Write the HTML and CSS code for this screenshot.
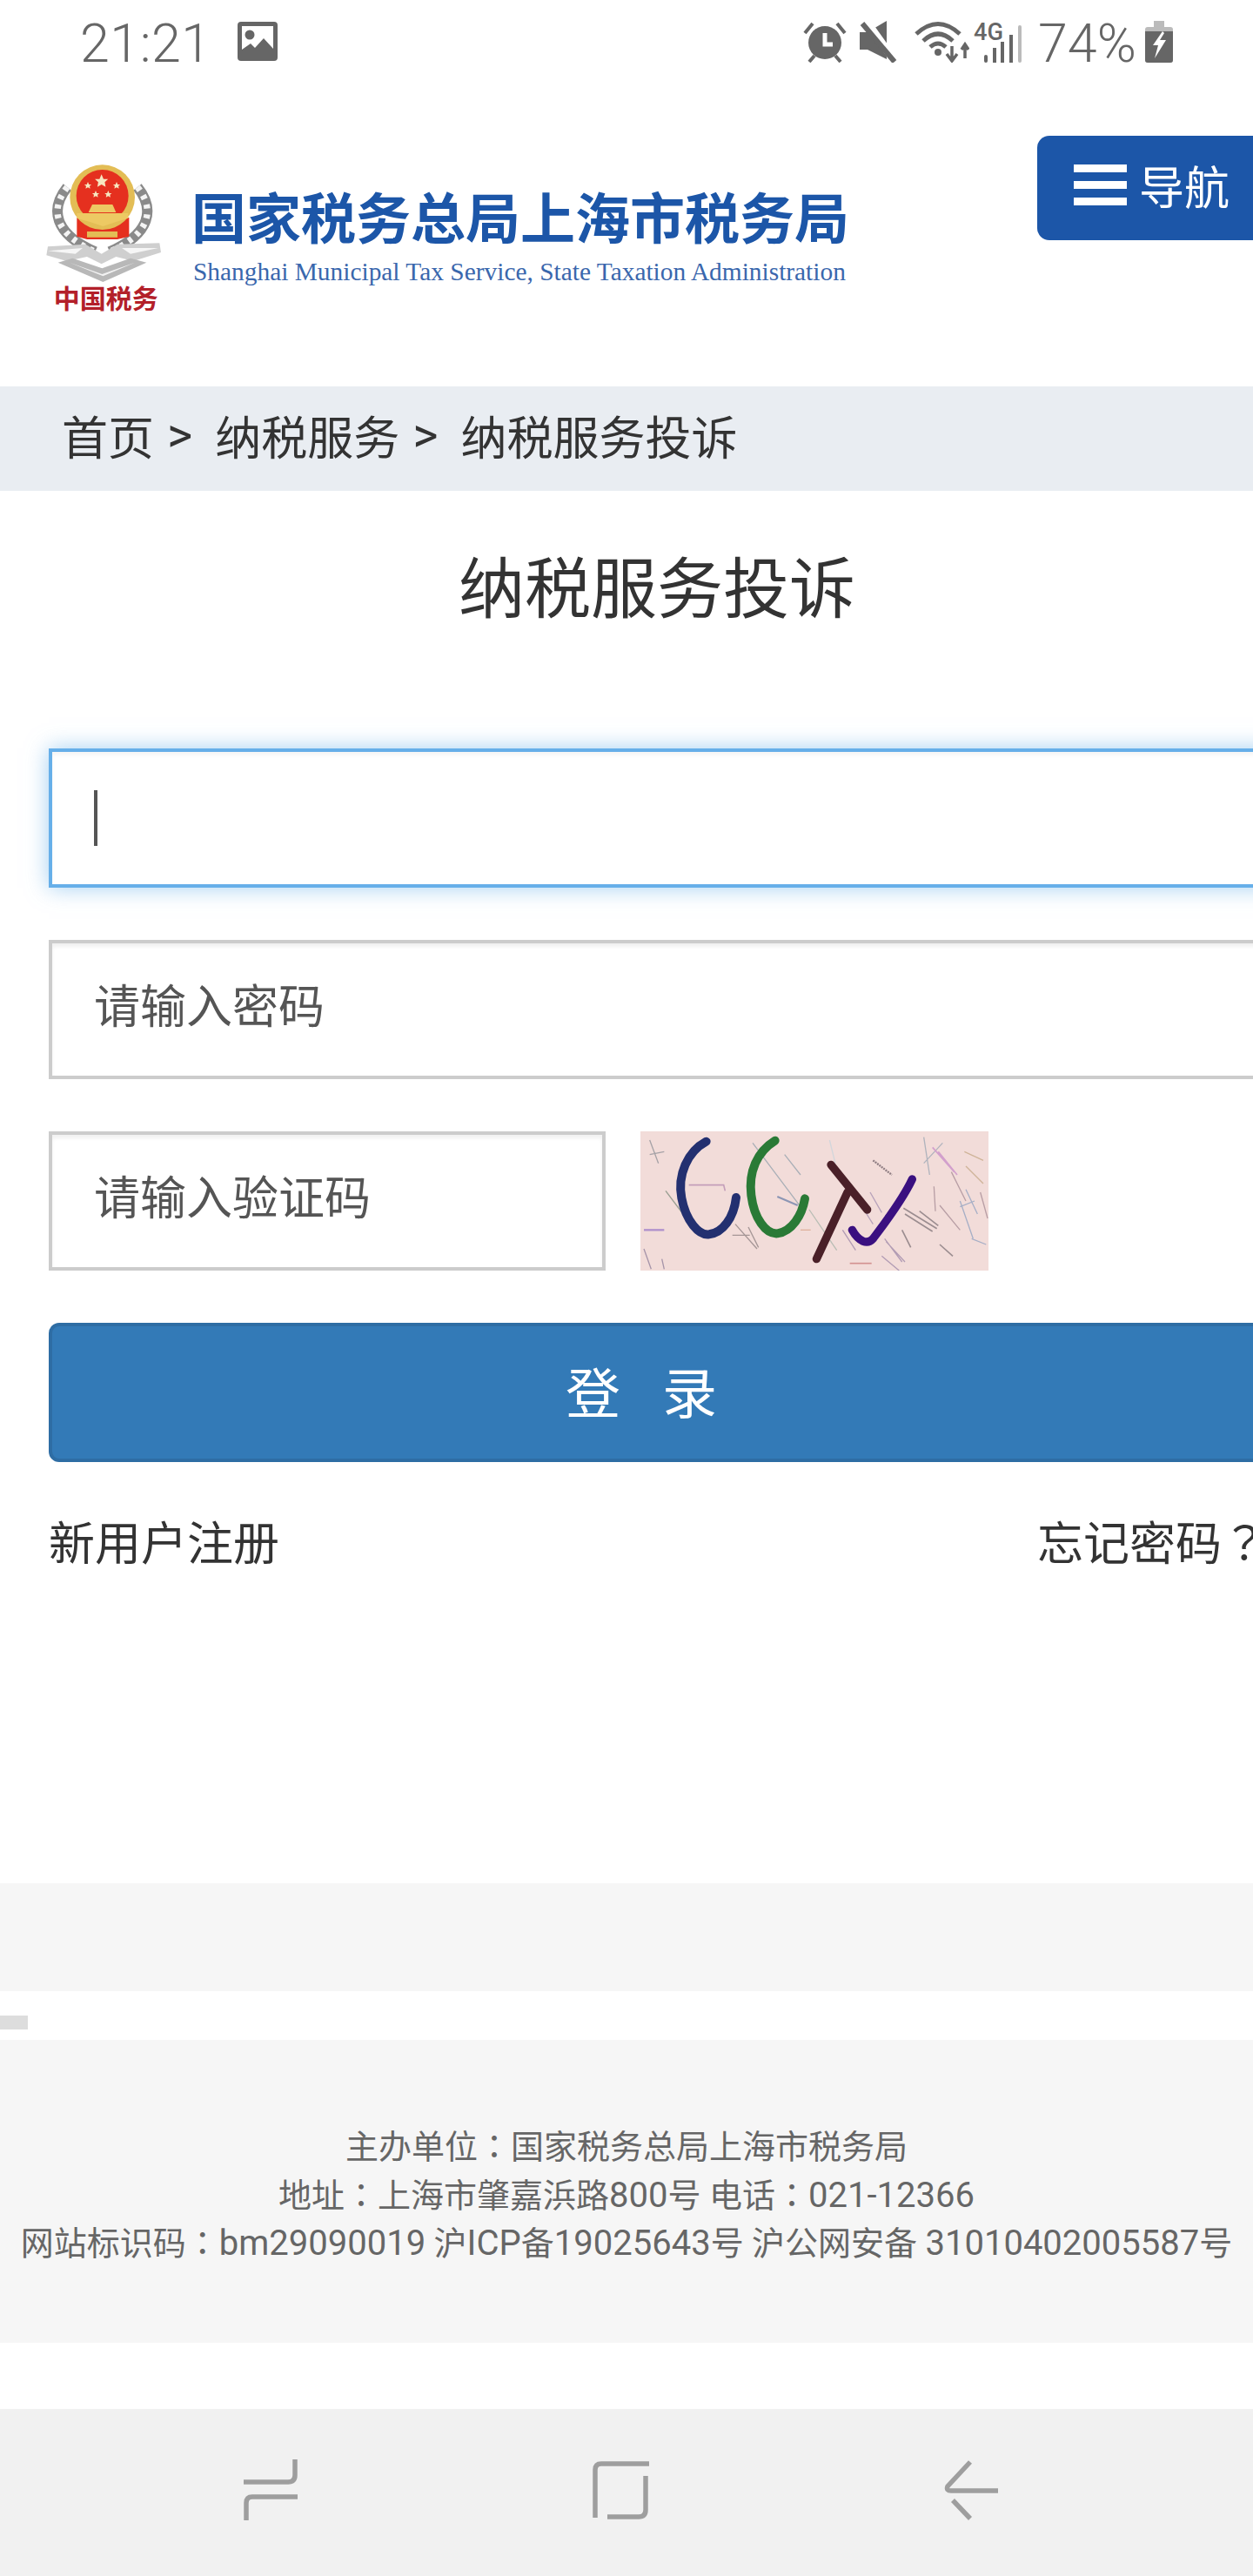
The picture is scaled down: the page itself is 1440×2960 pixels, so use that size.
FILE: index.html
```html
<!DOCTYPE html>
<html lang="zh-CN">
  <head>
    <meta charset="UTF-8" />
    <meta name="viewport" content="width=device-width, initial-scale=1.0" />
    <title>纳税服务投诉</title>
    <link rel="stylesheet" href="styles.css">
  </head>
  <body>
    <div class="status-bar">
      <span class="clock">21:21</span>
      <svg class="st-image" width="46" height="45" viewBox="0 0 46 45">
        <rect width="46" height="45" rx="4" fill="#666" />
        <rect x="5" y="5" width="36" height="32" fill="#fff" />
        <ellipse cx="14" cy="15" rx="5.5" ry="5.5" fill="#666" />
        <path d="M5 32 L15 25 L20 30 L30 19 L41 31 V38 H5 Z" fill="#666" />
      </svg>
      <div class="status-right">
        <svg width="50" height="48" viewBox="0 0 50 48">
          <circle cx="25" cy="25" r="19" fill="#666" />
          <path d="M25 14 V27 H34" fill="none" stroke="#fff" stroke-width="5" />
          <path d="M2 14 L11 3 M48 14 L39 3 M7 47 L13 40 M43 47 L37 40" fill="none" stroke="#666" stroke-width="4" />
        </svg>
        <svg class="st-mute" width="44" height="48" viewBox="0 0 44 48">
          <path d="M0 13 H9 L31 0 V44 L9 33 H0 Z" fill="#666" />
          <path d="M8 1 L41 47" stroke="#fff" stroke-width="9" />
          <path d="M3 3 L40 47" stroke="#666" stroke-width="6" />
        </svg>
        <svg class="st-wifi" width="63" height="48" viewBox="0 0 63 48">
          <g fill="none" stroke="#666" stroke-width="5">
            <path d="M2 15 Q27 -8 52 15" />
            <path d="M10 23 Q27 7 44 23" />
            <path d="M18 30 Q27 22 36 30" />
          </g>
          <circle cx="27" cy="36" r="4" fill="#666" />
          <path d="M43 29 V44 M37 38 L43 46 L49 38 M58 43 V28 M54 33 L58 27 L62 33" fill="none" stroke="#666" stroke-width="3.5" />
        </svg>
        <svg class="st-signal" width="55" height="56" viewBox="0 -8 55 56">
          <text class="net-label" x="0" y="22" textLength="34" lengthAdjust="spacingAndGlyphs">4G</text>
          <rect x="12" y="39" width="4" height="9" rx="2" fill="#666" />
          <rect x="22" y="31" width="4" height="17" fill="#666" />
          <rect x="31" y="24" width="4" height="24" fill="#666" />
          <rect x="41" y="16" width="4" height="32" fill="#666" />
          <rect x="51" y="5" width="4" height="43" rx="2" fill="#bbb" />
        </svg>
        <span class="battery-pct">74%</span>
        <svg class="st-battery" width="32" height="48" viewBox="0 0 32 48">
          <path d="M10 0 H22 V7 H29 Q32 7 32 10 V45 Q32 48 29 48 H3 Q0 48 0 45 V10 Q0 7 3 7 H10 Z" fill="#bbb" />
          <path d="M0 12 H32 V45 Q32 48 29 48 H3 Q0 48 0 45 Z" fill="#666" />
          <path d="M20 12 L9 28 H15 L11 43 L24 22 H17 L22 14 Z" fill="#fff" />
        </svg>
      </div>
    </div>

    <header class="site-head">
      <svg class="emblem" width="140" height="185" viewBox="90 75 420 555">
        <defs>
          <path id="star" d="M0 -10 L2.9 -3.1 L9.5 -3.1 L4.7 1.2 L5.9 8.1 L0 4.5 L-5.9 8.1 L-4.7 1.2 L-9.5 -3.1 L-2.9 -3.1 Z" />
        </defs>
        <g fill="none">
          <path d="M172 165 C112 240 125 325 268 388" stroke="#8a8a8a" stroke-width="36" />
          <path d="M172 165 C112 240 125 325 268 388" stroke="#f4f4f4" stroke-width="22" stroke-dasharray="14 20" />
          <path d="M414 165 C474 240 461 325 318 388" stroke="#8a8a8a" stroke-width="36" />
          <path d="M414 165 C474 240 461 325 318 388" stroke="#f4f4f4" stroke-width="22" stroke-dasharray="14 20" />
        </g>
        <path d="M100 400 L105 370 L235 362 L290 395 L345 362 L490 358 L495 390 L400 420 L340 405 L290 430 L240 405 L170 420 Z" fill="#cfcfcf" />
        <path d="M105 385 L225 375 L200 395 Z M485 375 L360 375 L390 395 Z" fill="#f6f6f6" />
        <path d="M140 425 L190 410 L292 445 L390 410 L445 425 L295 492 Z" fill="#b8b8b8" />
        <path d="M180 425 L292 465 L405 425 L295 472 Z" fill="#f2f2f2" />
        <path d="M205 270 H385 V335 L345 345 H240 L205 335 Z" fill="#e5301f" />
        <circle cx="293" cy="200" r="112" fill="#e3bd55" />
        <circle cx="293" cy="195" r="90" fill="#e5301f" />
        <use href="#star" transform="translate(290 145) scale(2.4)" fill="#f7e6c0" />
        <use href="#star" transform="translate(243 160) scale(1.3)" fill="#f7e6c0" />
        <use href="#star" transform="translate(342 160) scale(1.3)" fill="#f7e6c0" />
        <use href="#star" transform="translate(270 190) scale(1.3)" fill="#f7e6c0" />
        <use href="#star" transform="translate(313 190) scale(1.3)" fill="#f7e6c0" />
        <path d="M258 225 H328 L340 252 H245 Z" fill="#edc963" />
        <path d="M205 255 H382 V272 L340 285 L295 300 L250 285 L205 272 Z" fill="#edc963" />
        <path d="M240 318 H345 V338 H240 Z" fill="#e3bd55" />
        <text class="emblem-label" x="125" y="582" textLength="360" lengthAdjust="spacingAndGlyphs">中国税务</text>
      </svg>
      <div class="logo-text">
        <div class="logo-cn">国家税务总局上海市税务局</div>
        <div class="logo-en">Shanghai Municipal Tax Service, State Taxation Administration</div>
      </div>
      <a class="nav-btn">
        <span class="bars"><i></i><i></i><i></i></span>
        <span>导航</span>
      </a>
    </header>

    <nav class="crumbs">
      <a>首页</a><span class="sep">&gt;</span><a>纳税服务</a><span class="sep">&gt;</span><a>纳税服务投诉</a>
    </nav>

    <main class="content">
      <h1>纳税服务投诉</h1>
      <form class="login">
        <div class="field field-focus"><span class="caret"></span></div>
        <input class="field" type="password" placeholder="请输入密码" />
        <div class="code-row">
          <input class="field field-code" type="text" placeholder="请输入验证码" />
          <svg class="captcha" width="400" height="160" viewBox="48 60 1200 480">
            <rect x="48" y="60" width="1200" height="480" fill="#f2dcd9" />
            <g class="noise" fill="none" stroke-width="4">
              <path d="M80 90 L110 170 M80 140 L130 130" stroke="#8d8f96" />
              <path d="M60 400 H130" stroke="#9a78c8" stroke-width="7" />
              <path d="M60 465 L85 535 M122 500 L130 535" stroke="#8d7d9a" />
              <path d="M215 245 H335 L340 265" stroke="#b58ab0" stroke-width="5" />
              <path d="M135 265 L195 345" stroke="#7c8a7a" />
              <path d="M365 418 H425 M375 380 L450 465 M420 390 L455 460" stroke="#8c7f80" />
              <path d="M435 100 L600 320 M545 140 L600 210" stroke="#92a0ac" />
              <path d="M520 285 L590 315" stroke="#6b7fa8" stroke-width="6" />
              <path d="M600 400 H635" stroke="#d9a58a" />
              <path d="M630 330 L725 470" stroke="#a5b3a8" />
              <path d="M700 90 L720 170" stroke="#c8d4dc" />
              <path d="M850 160 L915 210" stroke="#6d5d65" stroke-width="7" stroke-dasharray="6 3" />
              <path d="M840 270 L880 340 M800 300 L850 380" stroke="#a48fb0" />
              <path d="M745 400 L790 470 M880 490 L940 540 M895 440 L960 510 M890 430 L950 510" stroke="#9d87a8" />
              <path d="M955 325 L1070 395 M1010 335 L1075 385 M960 345 L1055 405 M950 400 L980 460" stroke="#7f7378" stroke-width="5" />
              <path d="M1025 80 L1045 210 M1025 170 L1090 100" stroke="#9aa6b4" />
              <path d="M1055 115 L1130 200 M1075 130 L1140 210" stroke="#c88cc8" stroke-width="5" />
              <path d="M1060 250 L1065 335 M1080 315 L1150 400 M1120 200 L1170 300" stroke="#a58a94" />
              <path d="M1165 130 L1230 160 M1170 180 L1230 240" stroke="#c4a784" />
              <path d="M1150 320 L1200 300 M1170 260 L1210 345 M1150 300 L1195 430 M1190 430 L1240 450" stroke="#8ea0c0" />
              <path d="M1220 270 L1245 360" stroke="#a58a94" />
              <path d="M1080 450 L1125 490" stroke="#7f7378" stroke-width="5" />
              <path d="M770 515 H845" stroke="#c87878" stroke-width="5" />
            </g>
            <g fill="none" stroke-linecap="round">
              <path d="M275 95 C210 130 175 210 190 290 C205 370 250 420 285 415 C330 410 370 360 378 288" stroke="#233070" stroke-width="30" />
              <path d="M512 92 C450 130 420 200 430 280 C440 360 480 415 520 412 C570 405 605 350 615 292" stroke="#2a7a36" stroke-width="30" />
              <path d="M705 175 L830 330 M762 270 L655 500" stroke="#4a2028" stroke-width="28" />
              <path d="M778 400 C800 440 830 452 850 430 C880 390 950 300 985 225" stroke="#3a1080" stroke-width="28" />
            </g>
          </svg>
        </div>
        <button class="submit" type="button">登录</button>
        <div class="links">
          <a>新用户注册</a>
          <a>忘记密码<span class="fw" lang="zh-TW">？</span></a>
        </div>
      </form>
    </main>

    <div class="band"></div>
    <div class="scroll-stub"></div>

    <footer class="site-foot">
      <p>主办单位<span class="fw" lang="zh-TW">：</span>国家税务总局上海市税务局</p>
      <p>地址<span class="fw" lang="zh-TW">：</span>上海市肇嘉浜路<span class="num">800</span>号 电话<span class="fw" lang="zh-TW">：</span><span class="num">021-12366</span></p>
      <p>网站标识码<span class="fw" lang="zh-TW">：</span><span class="num">bm29090019</span> 沪<span class="num">ICP</span>备<span class="num">19025643</span>号 沪公网安备 <span class="num">31010402005587</span>号</p>
    </footer>

    <div class="nav-bar">
      <svg width="62" height="70" viewBox="0 0 62 70">
        <path d="M59 0 V18 Q59 26 51 26 H0" />
        <path d="M62 43 H10 Q3 43 3 50 V70" />
      </svg>
      <svg width="65" height="67" viewBox="0 0 65 67">
        <path d="M65 3 H10 Q3 3 3 10 V65" />
        <path d="M61 17 V56 Q61 64 53 64 H17" />
      </svg>
      <svg width="62" height="69" viewBox="0 0 62 69">
        <path d="M30 2 L4 30 Q2 35 8 35 H62" />
        <path d="M10 46 L30 67" />
      </svg>
    </div>
  </body>
</html>
```

FILE: styles.css
```css
* {
  box-sizing: border-box;
}
body {
  margin: 0;
  width: 1440px;
  height: 2960px;
  overflow: hidden;
  background-color: #fff;
  color: #333;
  font-family: Roboto, "Noto Sans CJK SC", sans-serif;
}
.fw {
  font-family: "Noto Sans CJK TC", sans-serif;
}
.status-bar {
  height: 100px;
  display: flex;
  align-items: flex-start;
  padding: 24px 92px 0 92px;
  color: #666;
}
.clock {
  width: 148px;
  font-size: 61px;
  line-height: 52px;
  font-weight: 300;
  letter-spacing: 0.5px;
  white-space: nowrap;
}
.st-image {
  margin-left: 33px;
  margin-top: 1px;
}
.status-right {
  margin-left: auto;
  display: flex;
  align-items: flex-start;
}
.st-mute {
  margin-left: 15px;
}
.st-wifi {
  margin-left: 19px;
}
.st-signal {
  margin-left: 5px;
  margin-top: -8px;
  margin-bottom: 8px;
}
.net-label {
  font-size: 28px;
  font-weight: 500;
  fill: #666;
}
.battery-pct {
  width: 109px;
  margin-left: 19px;
  font-size: 61px;
  line-height: 52px;
  font-weight: 300;
  white-space: nowrap;
}
.st-battery {
  margin-left: 14px;
}
.site-head {
  height: 344px;
  display: flex;
  align-items: flex-start;
}
.emblem {
  margin-left: 50px;
  margin-top: 85px;
}
.emblem-label {
  font-family: "Noto Sans CJK SC", sans-serif;
  font-size: 90px;
  font-weight: 700;
  fill: #b3202a;
}
.logo-text {
  margin-left: 30px;
  margin-top: 112px;
}
.logo-cn {
  font-family: "Noto Sans CJK SC", sans-serif;
  font-size: 63px;
  line-height: 70px;
  font-weight: 700;
  color: #1c56a8;
  white-space: nowrap;
}
.logo-en {
  font-family: "Liberation Serif", serif;
  font-size: 29.4px;
  line-height: 36px;
  margin-top: 12px;
  margin-left: 2px;
  color: #3a67ad;
  white-space: nowrap;
}
.nav-btn {
  margin-left: auto;
  margin-top: 56px;
  width: 248px;
  height: 120px;
  padding: 0 0 8px 42px;
  display: flex;
  align-items: center;
  gap: 14px;
  background-color: #1c56a8;
  border-radius: 14px 0 0 14px;
  color: #fff;
  font-family: "Noto Sans CJK SC", sans-serif;
  font-size: 52px;
}
.bars {
  display: flex;
  flex-direction: column;
  gap: 10px;
}
.bars i {
  display: block;
  width: 61px;
  height: 9px;
  background-color: #fff;
}
.crumbs {
  height: 120px;
  display: flex;
  align-items: center;
  padding: 0 0 8px 71px;
  background-color: #e9edf2;
  font-family: "Noto Sans CJK SC", sans-serif;
  font-size: 53px;
}
.sep {
  font-family: Roboto, sans-serif;
  font-size: 56px;
  margin: 0 26px 0 15px;
}
.content {
  width: 1510px;
}
.content h1 {
  margin: 57px 0 139px;
  text-align: center;
  font-family: "Noto Sans CJK SC", sans-serif;
  font-size: 76px;
  line-height: 100px;
  font-weight: 400;
}
.login {
  margin-left: 56px;
  width: 1454px;
  font-family: "Noto Sans CJK SC", sans-serif;
}
.field {
  display: flex;
  align-items: center;
  width: 100%;
  height: 160px;
  margin: 0 0 60px;
  padding: 0 48px 14px;
  border: 4px solid #ccc;
  background-color: #fff;
  font-family: inherit;
  font-size: 53px;
  color: #555;
  box-shadow: inset 0 4px 4px rgba(0, 0, 0, 0.06);
  outline: none;
  border-radius: 0;
}
.field::placeholder {
  color: #555;
  opacity: 1;
}
.field-focus {
  padding-bottom: 0;
  border-color: #66afe9;
  box-shadow: inset 0 4px 4px rgba(0, 0, 0, 0.04), 0 0 24px rgba(102, 175, 233, 0.6);
}
.caret {
  display: block;
  width: 4px;
  height: 64px;
  background-color: #555;
}
.code-row {
  display: flex;
  align-items: flex-start;
  gap: 40px;
}
.field-code {
  width: 640px;
}
.captcha {
  display: block;
  filter: blur(0.5px);
}
.noise {
  opacity: 0.75;
}
.submit {
  display: block;
  width: 100%;
  height: 160px;
  padding: 0 44px 8px 0;
  border: 4px solid #2e6da4;
  border-radius: 12px;
  background-color: #337ab7;
  color: #fff;
  font-family: inherit;
  font-size: 63px;
  letter-spacing: 48px;
}
.links {
  width: 1401px;
  margin-top: 54px;
  display: flex;
  justify-content: space-between;
  font-size: 53px;
  line-height: 72px;
}
.band {
  height: 124px;
  margin-top: 358px;
  background-color: #f6f6f6;
}
.scroll-stub {
  width: 32px;
  height: 16px;
  margin-top: 28px;
  background-color: #ddd;
}
.site-foot {
  height: 348px;
  margin-top: 12px;
  padding-top: 92px;
  background-color: #f6f6f6;
  color: #666;
  text-align: center;
  font-size: 38px;
  line-height: 55.5px;
}
.site-foot p {
  margin: 0;
  height: 55.5px;
  white-space: nowrap;
}
.num {
  font-size: 40px;
}
.nav-bar {
  height: 192px;
  margin-top: 76px;
  padding: 0 0 6px 280px;
  display: flex;
  align-items: center;
  gap: 339px;
  background-color: #f1f1f1;
}
.nav-bar path {
  fill: none;
  stroke: #9e9e9e;
  stroke-width: 5.5;
}
```
